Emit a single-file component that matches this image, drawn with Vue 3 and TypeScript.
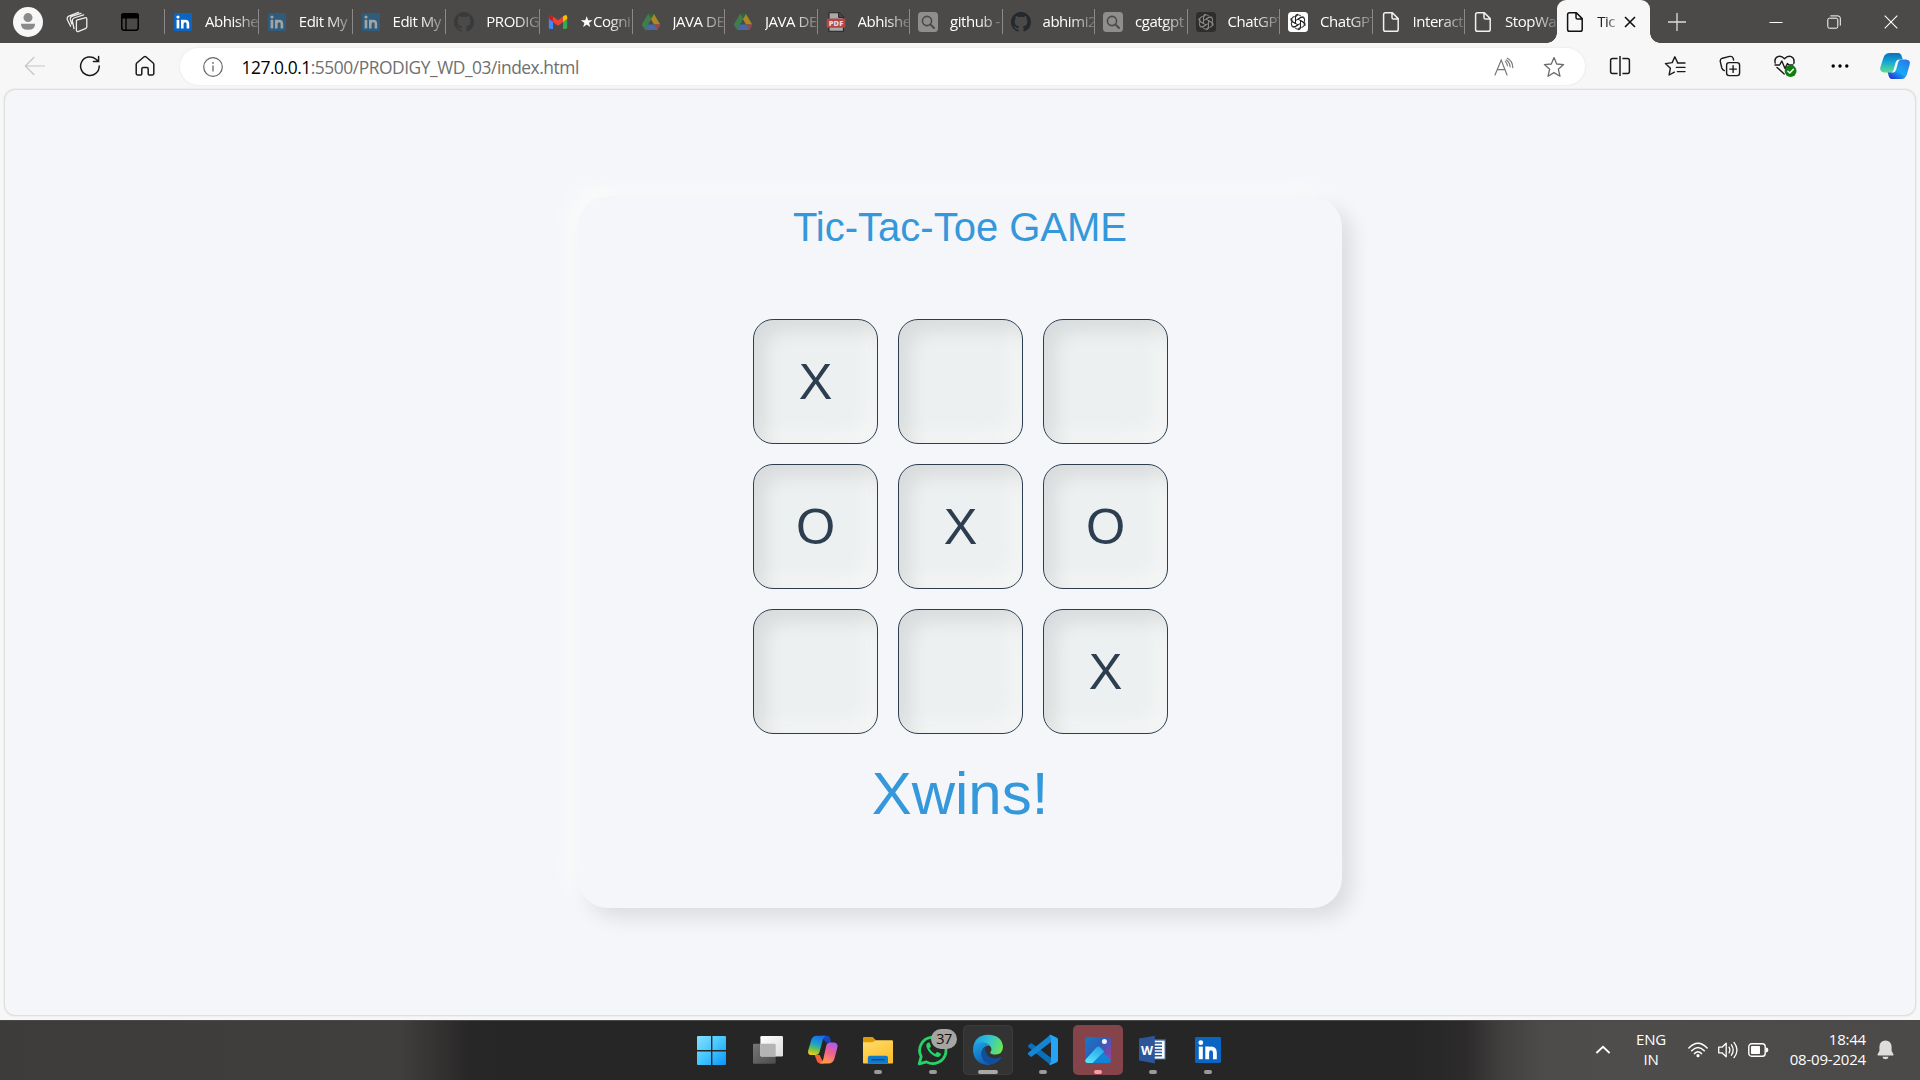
<script setup lang="ts">
interface Tab {
  icon: string
  title: string
  width: number
  dim?: boolean
}

const tabs: Tab[] = [
  { icon: 'linkedin', title: 'Abhishe', width: 93.75 },
  { icon: 'linkedin', title: 'Edit My', width: 93.75, dim: true },
  { icon: 'linkedin', title: 'Edit My', width: 93.75, dim: true },
  { icon: 'github', title: 'PRODIG', width: 93.75 },
  { icon: 'gmail', title: '★Cogni', width: 92.5 },
  { icon: 'drive', title: 'JAVA DE', width: 92.5, dim: true },
  { icon: 'drive', title: 'JAVA DE', width: 92.5, dim: true },
  { icon: 'pdf', title: 'Abhishe', width: 92.5 },
  { icon: 'search', title: 'github -', width: 92.5 },
  { icon: 'github', title: 'abhimi2', width: 92.5 },
  { icon: 'search', title: 'cgatgpt', width: 92.5 },
  { icon: 'gptdark', title: 'ChatGPT', width: 92.5 },
  { icon: 'gpt', title: 'ChatGPT', width: 92.5 },
  { icon: 'doc', title: 'Interact', width: 92.5 },
  { icon: 'doc', title: 'StopWa', width: 92.7 },
]

const board: string[] = ['X', '', '', 'O', 'X', 'O', '', '', 'X']

const apps: string[] = ['start', 'taskview', 'copilot', 'files', 'whatsapp', 'edge', 'vscode', 'photos', 'word', 'linkedin']
const running = (a: string): boolean => !['start', 'taskview', 'copilot'].includes(a)
const petals: number[] = [0, 60, 120, 180, 240, 300]
</script>

<template>
  <div class="screen">
    <header class="tabstrip">
      <div class="left-tools">
        <svg class="profile" width="30" height="30" viewBox="0 0 30 30">
          <circle cx="15" cy="15" r="15" fill="#f7f7f7" />
          <circle cx="15" cy="10.6" r="4.5" fill="#8a8a8a" />
          <path d="M8 16.8H22Q22.4 22.8 15 22.8T8 16.8Z" fill="#8a8a8a" />
        </svg>
        <svg class="workspaces" width="22" height="22" viewBox="0 0 22 22" fill="none" stroke="#eee" stroke-width="1.3" stroke-linejoin="round" stroke-linecap="round">
          <path d="M10.8 9.2 18.8 6.8Q20.8 6.3 20.8 8.2V15.8Q20.8 17.2 19.4 17.7L12.6 20.4Q10.6 21 10.4 19.2V9.8Z" />
          <path d="M8 17.6 6.4 10.2Q6 7.8 8 7L17.6 3.8M4.6 15.2 1.4 8.8Q.6 6.2 2.8 5.2L12.6 1.4M5.8 13 4.4 8.6Q3.8 6.2 5.8 5.4L15 2.4" />
        </svg>
        <svg class="panel" width="18" height="18" viewBox="0 0 18 18">
          <rect x=".8" y=".8" width="16.4" height="16.4" rx="2.4" fill="none" stroke="#000" stroke-width="1.5" />
          <path d="M0 5.5V3Q0 0 3 0H15Q18 0 18 3V5.5Z" />
          <path d="M5 5V17" stroke="#000" stroke-width="1.4" />
        </svg>
      </div>

      <div v-for="(t, i) in tabs" :key="i" class="tab" :style="{ width: t.width + 'px' }">
        <svg v-if="t.icon === 'linkedin'" class="fav" viewBox="0 0 20 20">
          <rect x="1" y="1" width="18" height="18" rx="1" :fill="t.dim ? '#2d5c7c' : '#0a66c2'" />
          <g :fill="t.dim ? '#a3a3a2' : '#fff'">
            <rect x="3.6" y="7.8" width="2.7" height="8.6" />
            <circle cx="5" cy="5" r="1.6" />
          </g>
          <path d="M9.3 16.4V7.8M9.3 16.4V12Q9.3 9 12.2 9 14.9 9 14.9 12V16.4" fill="none" :stroke="t.dim ? '#a3a3a2' : '#fff'" stroke-width="2.6" />
        </svg>
        <svg v-else-if="t.icon === 'github'" class="fav" viewBox="0 0 16 16">
          <path fill="#24292f" :opacity="i === 3 ? 0.45 : 1" d="M8 0C3.58 0 0 3.58 0 8c0 3.54 2.29 6.53 5.47 7.59.4.07.55-.17.55-.38v-1.49c-2.01.37-2.53-.49-2.69-.94-.09-.23-.48-.94-.82-1.13-.28-.15-.68-.52-.01-.53.63-.01 1.08.58 1.23.82.72 1.21 1.87.87 2.33.66.07-.52.28-.87.51-1.07-1.78-.2-3.64-.89-3.64-3.95 0-.87.31-1.59.82-2.15-.08-.2-.36-1.02.08-2.12 0 0 .67-.21 2.2.82a7.6 7.6 0 0 1 4 0c1.53-1.04 2.2-.82 2.2-.82.44 1.1.16 1.92.08 2.12.51.56.82 1.27.82 2.15 0 3.07-1.87 3.75-3.65 3.95.29.25.54.73.54 1.48v2.2c0 .21.15.46.55.38A8 8 0 0 0 16 8c0-4.42-3.58-8-8-8Z" />
        </svg>
        <svg v-else-if="t.icon === 'gmail'" class="fav" viewBox="0 0 20 20">
          <path d="M.8 5V15.6Q.8 17 2.2 17H5V8Z" fill="#4285f4" />
          <path d="M19.2 5V15.6Q19.2 17 17.8 17H15V8Z" fill="#34a853" />
          <path d="M15 4.5V10L19.2 6.8V5Q19 2 16.4 3.4Z" fill="#fbbc04" />
          <path d="M5 4.5V10L10 13.7 15 10V4.5L10 8.2Z" fill="#ea4335" />
          <path d="M.8 5V6.8L5 10V4.5L3.6 3.4Q1 2 .8 5Z" fill="#c5221f" />
        </svg>
        <svg v-else-if="t.icon === 'drive'" class="fav drive" viewBox="0 0 20 20">
          <path d="M7 2H13L4 18 .8 12.6Z" fill="#34a853" />
          <path d="M7 2H13L19.2 12.6H13Z" fill="#fbbc04" />
          <path d="M6.9 12.6H19.2L16.3 18H4Z" fill="#4285f4" />
          <path d="M7 2H13L10 7.3Z" fill="#188038" />
          <path d="M13 12.6H19.2L16.3 18Z" fill="#ea4335" />
        </svg>
        <svg v-else-if="t.icon === 'pdf'" class="fav" viewBox="0 0 20 20">
          <path d="M3 .7H13L17.4 5V19.3H3Z" fill="#a9a9a9" stroke="#252525" stroke-width="1.1" />
          <path d="M12.6.7V5.4H17.4" fill="#4b4a48" stroke="#252525" />
          <rect x=".7" y="6.4" width="18.6" height="9.4" rx="1" fill="#b34747" />
          <text x="10" y="13.9" text-anchor="middle" font-family="Open Sans, sans-serif" font-weight="800" font-size="7.6" fill="#ddd">PDF</text>
        </svg>
        <svg v-else-if="t.icon === 'search'" class="fav" viewBox="0 0 20 20">
          <rect width="20" height="20" rx="3.5" fill="#8f8e8c" />
          <circle cx="9" cy="9" r="4.6" fill="none" stroke="#4b4a48" stroke-width="1.6" />
          <path d="M12.4 12.4 16 16" stroke="#4b4a48" stroke-width="2" stroke-linecap="round" />
        </svg>
        <svg v-else-if="t.icon === 'gpt' || t.icon === 'gptdark'" class="fav" viewBox="0 0 20 20">
          <rect width="20" height="20" rx="3.5" :fill="t.icon === 'gpt' ? '#fff' : '#2e2d2c'" />
          <g fill="none" :stroke="t.icon === 'gpt' ? '#222' : '#8a8988'" stroke-width="1">
            <path v-for="a in petals" :key="a" :transform="`rotate(${a} 10 10)`" d="M7.5 11.5V5.9Q7.6 3.1 10.3 2.9 12.1 3 13.1 4.4M9.8 7.2 13.4 5.1Q15.5 4.2 16.7 6.2" />
          </g>
        </svg>
        <svg v-else class="fav" viewBox="0 0 20 20" fill="none" stroke="#f0f0f0" stroke-width="1.5" stroke-linejoin="round">
          <path d="M4.6.8H11.4L17.2 6.6V17.4Q17.2 19.2 15.4 19.2H4.4Q2.6 19.2 2.6 17.4V2.6Q2.6.8 4.6.8ZM11 .8V5.4Q11 7 12.6 7H17.2" />
        </svg>
        <span class="tab-title">{{ t.title }}</span>
      </div>

      <div class="tab active">
        <svg class="fav" viewBox="0 0 20 20" fill="none" stroke="#111" stroke-width="1.5" stroke-linejoin="round">
          <path d="M4.6.8H11.4L17.2 6.6V17.4Q17.2 19.2 15.4 19.2H4.4Q2.6 19.2 2.6 17.4V2.6Q2.6.8 4.6.8ZM11 .8V5.4Q11 7 12.6 7H17.2" />
        </svg>
        <span class="tab-title">Tic</span>
        <svg class="tab-close" width="12" height="12" viewBox="0 0 12 12"><path d="M1 1 11 11M11 1 1 11" stroke="#111" stroke-width="1.6" /></svg>
      </div>

      <svg class="new-tab" width="18" height="18" viewBox="0 0 18 18"><path d="M9 0V18M0 9H18" stroke="#ddd" stroke-width="1.3" /></svg>
      <div class="window-buttons">
        <svg width="14" height="14" viewBox="0 0 14 14"><path d="M.5 7.5H13.5" stroke="#fff" /></svg>
        <svg width="14" height="14" viewBox="0 0 14 14" fill="none" stroke="#fff"><rect x=".8" y="3.2" width="10" height="10" rx="1.6" /><path d="M3.4.9H11Q13.3.9 13.3 3.2V10.6" /></svg>
        <svg width="14" height="14" viewBox="0 0 14 14"><path d="M.7.7 13.3 13.3M13.3.7.7 13.3" stroke="#fff" stroke-width="1.1" /></svg>
      </div>
    </header>

    <nav class="toolbar">
      <div class="nav-buttons">
        <svg width="22" height="22" viewBox="0 0 22 22" fill="none" stroke="#c6c6c6" stroke-width="1.2"><path d="M21 11H1.5M10.3 2 1.3 11 10.3 20" /></svg>
        <svg width="22" height="22" viewBox="0 0 22 22" fill="none" stroke="#1a1a1a" stroke-width="1.5" stroke-linecap="round"><path d="M20.2 11A9.3 9.3 0 1 1 17 4.2L19.4 6.4M19.6 1.4V6.6H14.4" /></svg>
        <svg width="22" height="22" viewBox="0 0 22 22" fill="none" stroke="#1a1a1a" stroke-width="1.5" stroke-linejoin="round"><path d="M2.2 9.4Q2.2 8.6 2.8 8L10.1 1.8Q11 1.1 11.9 1.8L19.2 8Q19.8 8.6 19.8 9.4V18.6Q19.8 19.9 18.5 19.9H15.3Q14.2 19.9 14.2 18.8V14Q14.2 12.6 12.8 12.6H9.2Q7.8 12.6 7.8 14V18.8Q7.8 19.9 6.7 19.9H3.5Q2.2 19.9 2.2 18.6Z" /></svg>
      </div>
      <div class="address">
        <svg width="20" height="20" viewBox="0 0 20 20"><circle cx="10" cy="10" r="9.3" fill="none" stroke="#666" stroke-width="1.2" /><path d="M10 8.6V14.6" stroke="#666" stroke-width="1.3" /><circle cx="10" cy="5.9" r=".9" fill="#666" /></svg>
        <span class="url"><b>127.0.0.1</b>:5500/PRODIGY_WD_03/index.html</span>
        <svg class="read" width="20" height="20" viewBox="0 0 20 20" fill="none" stroke="#777" stroke-width="1.2" stroke-linecap="round"><path d="M1 18 7.2 3 13 18M3.4 12.6H10.9M11.4 4.6Q13.2 6 13.4 8.6M13.4 1.2Q18.6 4 18.8 10.6M12.2 3Q15.8 5.2 16.1 9.8" /></svg>
        <svg class="star" width="22" height="22" viewBox="0 0 22 22" fill="none" stroke="#6b6b6b" stroke-width="1.3" stroke-linejoin="round"><path d="M11 1.6 13.7 8 20.6 8.6 15.3 13.2 17 20.2 11 16.6 5 20.2 6.7 13.2 1.4 8.6 8.3 8Z" /></svg>
      </div>
      <div class="actions">
        <div><svg width="22" height="22" viewBox="0 0 22 22" fill="none" stroke="#1a1a1a" stroke-width="1.5"><path d="M8.6 3.6H3.6Q1.6 3.6 1.6 5.6V16.4Q1.6 18.4 3.6 18.4H8.6M13.4 3.6H18.4Q20.4 3.6 20.4 5.6V16.4Q20.4 18.4 18.4 18.4H13.4M11 1V21" /></svg></div>
        <div><svg width="22" height="22" viewBox="0 0 22 22" fill="none" stroke="#1a1a1a" stroke-width="1.4" stroke-linejoin="round" stroke-linecap="round"><path d="M13.6 7.6 10.8 1.8 8.2 7.6 1.4 8.6 6.4 13.2 5.1 20 10.4 17.2M13.4 8H21M12.4 12.4H21M13.4 16.6H21" /></svg></div>
        <div><svg width="22" height="22" viewBox="0 0 22 22" fill="none" stroke="#1a1a1a" stroke-width="1.4" stroke-linecap="round"><rect x="7.6" y="7.6" width="13" height="13" rx="2.6" /><path d="M14.1 10.8V17.4M10.8 14.1H17.4M5.4 15.6Q3.4 15 2.8 13L1.3 6.6Q.8 4 3.4 3.2L10.8 1.4Q13.2 1 14.2 3.2L14.6 5" /></svg></div>
        <div><svg width="26" height="24" viewBox="0 0 26 24" fill="none" stroke="#1a1a1a" stroke-width="1.4" stroke-linejoin="round" stroke-linecap="round"><path d="M3.2 9Q2 4.2 5.8 2.6 9.4 1.4 12.5 4.8 15.6 1.4 19.2 2.6 23 4.4 21.8 9.4M5 13.4 12.2 20M3 11H7.6L9.8 7 13 14.6 15.4 9.6 17 11H21" /><circle cx="18.6" cy="17" r="5.9" fill="#107c10" stroke="none" /><path d="M15.9 17.2 17.8 19 21.4 15.3" stroke="#fff" stroke-width="1.5" /></svg></div>
        <div><svg width="18" height="6" viewBox="0 0 18 6"><circle cx="2.2" cy="3" r="1.7" /><circle cx="9" cy="3" r="1.7" /><circle cx="15.8" cy="3" r="1.7" /></svg></div>
        <div>
          <svg width="30" height="28" viewBox="0 0 30 28">
            <defs>
              <linearGradient id="ca" x1="0" y1="0" x2="0" y2="1"><stop offset="0" stop-color="#0a6fb5" /><stop offset=".45" stop-color="#14a5d8" /><stop offset="1" stop-color="#5ee08a" /></linearGradient>
              <linearGradient id="cb" x1="1" y1="0" x2=".2" y2="1"><stop offset="0" stop-color="#2f6fe4" /><stop offset=".6" stop-color="#18aaf5" /><stop offset="1" stop-color="#2036d8" /></linearGradient>
            </defs>
            <path d="M18.6 7.5H26Q30.5 8 29.8 12L27 22Q25.5 27 21.5 27H12Q9 27 8.2 22L7.5 20H11.2Q14 20 15 16.6L16.8 10Z" fill="url(#cb)" />
            <path d="M19.4 7.6Q16.6 7.6 15.6 10.6L13.8 17Q13 20.4 10 20.4H13.6Q15.4 20.2 16.2 17.6L18.2 10.2Q19 7.8 21 7.6Z" fill="#f7f7f7" />
            <path d="M9.8 1H18.2Q21 1 21.8 4.6L22.8 7.6H19.4Q16.6 7.6 15.6 10.6L13.8 17Q13 20.4 10 20.4H4Q-.5 20 .3 15.6L3.5 5.6Q5 1 9.8 1Z" fill="url(#ca)" />
          </svg>
        </div>
      </div>
    </nav>

    <main class="viewport">
      <section class="card">
        <h1>Tic-Tac-Toe GAME</h1>
        <div class="grid">
          <button v-for="(c, i) in board" :key="i" class="cell">{{ c }}</button>
        </div>
        <p class="result">Xwins!</p>
      </section>
    </main>

    <footer class="taskbar">
      <div class="apps">
        <div v-for="a in apps" :key="a" class="app" :class="a">
          <svg width="50" height="50" viewBox="0 0 50 50">
            <template v-if="a === 'start'">
              <defs><linearGradient id="w" gradientUnits="userSpaceOnUse" x1="9" y1="11" x2="38" y2="40"><stop offset="0" stop-color="#86e0ff" /><stop offset=".5" stop-color="#43c6ff" /><stop offset="1" stop-color="#0a93fb" /></linearGradient></defs>
              <path d="M10 11H23V25H9V12Q9 11 10 11ZM24.4 11H37Q38 11 38 12V25H24.4ZM9 26.4H23V40H10Q9 40 9 39ZM24.4 26.4H38V39Q38 40 37 40H24.4Z" fill="url(#w)" />
            </template>
            <template v-else-if="a === 'taskview'">
              <defs>
                <linearGradient id="t1" x1="0" y1="0" x2="1" y2="1"><stop offset="0" stop-color="#fff" /><stop offset="1" stop-color="#dcdcdc" /></linearGradient>
                <linearGradient id="t2" x1="0" y1="0" x2="1" y2="1"><stop offset="0" stop-color="#777" /><stop offset="1" stop-color="#4c4c4c" /></linearGradient>
              </defs>
              <rect x="10" y="18.7" width="22.7" height="20" rx="1.2" fill="url(#t2)" />
              <rect x="17.4" y="11" width="22.6" height="20.4" rx="1.2" fill="url(#t1)" />
              <path d="M17.4 18.7H31.5Q32.7 18.7 32.7 20V31.4H18.5Q17.4 31.4 17.4 30Z" fill="#b4b4b4" />
            </template>
            <template v-else-if="a === 'copilot'">
              <defs>
                <linearGradient id="c1" x1=".5" y1="0" x2=".25" y2="1"><stop offset="0" stop-color="#1c6fe8" /><stop offset=".4" stop-color="#1b9fd0" /><stop offset=".7" stop-color="#6cc04a" /><stop offset="1" stop-color="#f6cf1c" /></linearGradient>
                <linearGradient id="c2" x1=".8" y1="0" x2=".4" y2="1"><stop offset="0" stop-color="#a65cf0" /><stop offset=".5" stop-color="#f0628c" /><stop offset="1" stop-color="#ff9a4a" /></linearGradient>
              </defs>
              <path d="M23 10.8H29Q31.6 11 32.4 14.4L33.2 17.6H28Z" fill="#1646c8" />
              <path d="M16.6 30H21.6L25.8 38.4H22Q19.4 38.2 18.6 35Z" fill="#f4603a" />
              <path d="M18.6 10.8H28Q25.6 11.6 24.8 14.8L21.6 26.8Q20.6 30 17.6 30H13.2Q9.2 29.6 10.2 25.4L13.4 14.6Q14.8 10.8 18.6 10.8Z" fill="url(#c1)" />
              <path d="M31.6 17.4H36Q40.4 18 39.4 22.4L36.4 33.8Q34.8 38.6 30.6 38.6H21.6Q24.2 38 25.2 34.6L28.2 21Q29 17.6 31.6 17.4Z" fill="url(#c2)" />
            </template>
            <template v-else-if="a === 'files'">
              <defs><linearGradient id="f" x1="0" y1="0" x2=".6" y2="1"><stop offset="0" stop-color="#ffdd6b" /><stop offset="1" stop-color="#fdbf2d" /></linearGradient></defs>
              <path d="M10 13.2Q10 12 11.2 12H19.6L23 15.2V18H10Z" fill="#dc9a06" />
              <path d="M10 17.2H19.6L23 15.2H38.8Q40 15.2 40 16.4V37.4Q40 38.6 38.8 38.6H11.2Q10 38.6 10 37.4Z" fill="url(#f)" />
              <path d="M14.8 38.6V33Q14.8 30.8 17 30.8H33Q35 30.8 35 33V38.6Z" fill="#0f79cc" />
              <path d="M18.5 34.7H31.5" stroke="#0a4c86" stroke-width="1.4" />
            </template>
            <template v-else-if="a === 'whatsapp'">
              <path d="M11.2 38.8 13.2 31.6A13.2 13.2 0 1 1 18.4 36.9Z" fill="none" stroke="#25d366" stroke-width="2.8" stroke-linejoin="round" />
              <path d="M20.6 17.4Q19 17.6 18.3 19.8 18 23.4 22.2 28 26.8 32.4 30.4 32Q33 31.2 33 28.8L29.2 26.8 27.2 29Q23.4 27.2 21.4 23.6L23 21.6 21.6 17.8Z" fill="#25d366" />
            </template>
            <template v-else-if="a === 'edge'">
              <defs>
                <linearGradient id="e1" x1="0" y1=".3" x2="1" y2=".6"><stop offset="0" stop-color="#1b9de2" /><stop offset=".5" stop-color="#34c6cf" /><stop offset="1" stop-color="#6be84f" /></linearGradient>
                <linearGradient id="e2" x1="0" y1="0" x2=".4" y2="1"><stop offset="0" stop-color="#1fa5ea" /><stop offset="1" stop-color="#0e63b6" /></linearGradient>
              </defs>
              <path d="M10.2 23Q11.6 10 25 9.8 39.6 10.4 40 22.6 39.4 29.4 32.8 29.6 27.4 29.6 27.2 27.6 30 24 26.6 20.6 20.4 15.6 10.2 23Z" fill="url(#e1)" />
              <path d="M10 25Q10.4 17.4 18.6 17.2 24 17.2 26.8 20.6 20 20.6 18.6 27.2 18.4 34.6 27 39.8 20 40.6 15 36.6 10 32 10 25Z" fill="url(#e2)" />
              <path d="M22.4 22.6Q16.6 26.4 19 32.6 21.8 38.4 27 39.8 34.8 38.6 38.6 32.4 38.6 31.6 37.4 32 31 35 25.8 31.6 21.4 28 22.4 22.6Z" fill="#124f9b" />
            </template>
            <template v-else-if="a === 'vscode'">
              <path d="M10.2 20.4 12.4 18.4Q13.2 17.9 14 18.4L33 32.8V38.8Q32 39.6 31 38.8L10.2 22Q9.6 21.2 10.2 20.4Z" fill="#0c6fba" />
              <path d="M10.2 29.4 12.4 31.4Q13.2 31.9 14 31.4L33 17V11Q32 10.2 31 11L10.2 27.8Q9.6 28.6 10.2 29.4Z" fill="#1487d4" />
              <path d="M31.2 10.2Q32 9.4 33.2 10L39 12.8Q40 13.4 40 14.4V35.4Q40 36.6 39 37.2L33.2 39.8Q32 40.4 31.2 39.6L33 37V13Z" fill="#26a3f2" />
            </template>
            <template v-else-if="a === 'photos'">
              <defs>
                <linearGradient id="p1" x1="0" y1="0" x2="1" y2=".8"><stop offset="0" stop-color="#1379cf" /><stop offset=".5" stop-color="#2c5fb8" /><stop offset="1" stop-color="#9a3fa4" /></linearGradient>
                <linearGradient id="p2" x1=".2" y1="1" x2=".8" y2="0"><stop offset="0" stop-color="#58e3fb" /><stop offset="1" stop-color="#23a4ea" /></linearGradient>
              </defs>
              <rect x="12" y="12" width="26" height="26" rx="2.4" fill="url(#p1)" />
              <path d="M20 38 30.4 27.2 38 34.8Q38 38 35.6 38Z" fill="#1283d6" />
              <path d="M12.2 35 23.4 22.6Q25.4 20.6 27.4 22.6L31.2 26.4 19.6 38H14.4Q12.2 38 12.2 35Z" fill="url(#p2)" />
              <circle cx="31.4" cy="16.6" r="2.5" fill="#f1f5fb" />
            </template>
            <template v-else-if="a === 'word'">
              <rect x="24" y="14" width="14" height="20.8" rx="1" fill="#2b579a" />
              <rect x="25" y="15.6" width="11.6" height="18" fill="#fff" />
              <path d="M25 18H34M25 21.2H34M25 24.4H34M25 27.6H34M25 30.8H34" stroke="#2b579a" stroke-width="1.5" />
              <path d="M11 13.4 26.8 10.8V38.4L11 35.6Z" fill="#2b579a" />
              <text x="19" y="29.8" text-anchor="middle" font-family="Open Sans, sans-serif" font-weight="700" font-size="13" textLength="12" lengthAdjust="spacingAndGlyphs" fill="#fff">W</text>
            </template>
            <template v-else>
              <rect x="12" y="12" width="26" height="26" rx="1.4" fill="#0a66c2" />
              <rect x="15.8" y="21.6" width="4" height="12.6" fill="#fff" />
              <circle cx="17.8" cy="17.7" r="2.4" fill="#fff" />
              <path d="M24.2 34.2V21.6M24.2 34.2V27.6Q24.3 23.4 28 23.4 31.8 23.4 31.9 27.6V34.2" fill="none" stroke="#fff" stroke-width="3.8" />
            </template>
          </svg>
          <span v-if="a === 'whatsapp'" class="badge">37</span>
          <i v-if="running(a)" class="mark"></i>
        </div>
      </div>

      <div class="tray">
        <svg width="16" height="10" viewBox="0 0 16 10"><path d="M1.4 8 8 1.8 14.6 8" fill="none" stroke="#fff" stroke-width="1.8" /></svg>
        <div class="lang">ENG<br />IN</div>
        <svg class="wifi" width="20" height="16" viewBox="0 0 20 16" fill="none" stroke="#fff" stroke-width="1.5" stroke-linecap="round"><path d="M.9 6Q10-3.6 19.1 6M3.7 8.8Q10 2.2 16.3 8.8M6.5 11.6Q10 7.8 13.5 11.6" /><circle cx="10" cy="13.7" r="1.6" fill="#fff" stroke="none" /></svg>
        <svg class="sound" width="20" height="18" viewBox="0 0 20 18" fill="none" stroke="#fff" stroke-width="1.3" stroke-linejoin="round" stroke-linecap="round"><path d="M.7 6.2H4L8.2 2.2V15.8L4 11.8H.7ZM11 6.2Q12.8 9 11 11.8M13.4 3.8Q17 9 13.4 14.2M16 1.4Q22 9 16 16.6" /></svg>
        <svg class="battery" width="21" height="14" viewBox="0 0 21 14"><rect x=".8" y=".8" width="16.4" height="12.4" rx="2.8" fill="none" stroke="#fff" stroke-width="1.4" /><rect x="3" y="3" width="9" height="8" rx=".8" fill="#fff" /><path d="M18 4.6Q20.4 4.6 20.4 7T18 9.4Z" fill="#fff" /></svg>
        <div class="clock">18:44<br />08-09-2024</div>
        <svg class="bell" width="17" height="20" viewBox="0 0 17 20"><path d="M8.5.4Q14.4.8 14.6 6.8V11L16.6 14.6Q16.6 15.6 15.8 15.6H1.2Q.4 15.6.4 14.6L2.4 11V6.8Q2.6.8 8.5.4ZM5.4 16.8H11.6Q11 19.3 8.5 19.3T5.4 16.8Z" fill="#dedddb" /></svg>
      </div>
    </footer>
  </div>
</template>

<style>
body {
  margin: 0;
  overflow: hidden;
}
</style>

<style scoped>
.screen {
  width: 1920px;
  height: 1080px;
  display: flex;
  flex-direction: column;
  background: #f7f7f7;
  font-family: "Open Sans", "Noto Sans", "DejaVu Sans", sans-serif;
  overflow: hidden;
}
.screen svg {
  display: block;
  flex: none;
}

/* Tab strip */
.tabstrip {
  height: 43px;
  flex: none;
  display: flex;
  align-items: center;
  background: #4b4a48;
}
.left-tools {
  width: 164px;
  flex: none;
  display: flex;
  align-items: center;
}
.profile {
  margin-left: 13px;
}
.workspaces {
  margin-left: 23px;
}
.panel {
  margin-left: 33px;
}
.tab {
  box-sizing: border-box;
  height: 43px;
  flex: none;
  display: flex;
  align-items: center;
  padding-left: 9px;
  color: #fff;
  font-size: 15px;
  background: linear-gradient(#8b8a89, #8b8a89) 0 9px / 1px 25px no-repeat;
}
.fav {
  width: 20px;
  height: 20px;
  margin-top: 1px;
}
.fav.drive {
  opacity: 0.55;
}
.tab-title {
  flex: 1;
  min-width: 0;
  margin-left: 12px;
  overflow: hidden;
  white-space: nowrap;
  letter-spacing: -0.45px;
  line-height: 22px;
  margin-top: -2px;
  -webkit-mask-image: linear-gradient(to right, #000 calc(100% - 24px), rgba(0, 0, 0, 0.2));
  mask-image: linear-gradient(to right, #000 calc(100% - 24px), rgba(0, 0, 0, 0.2));
}
.tab.active {
  position: relative;
  width: 93px;
  padding-left: 8px;
  border-radius: 9px 9px 0 0;
  background: #f7f7f7;
  color: #222;
}
.tab.active::before,
.tab.active::after {
  content: "";
  position: absolute;
  bottom: 0;
  width: 10px;
  height: 10px;
}
.tab.active::before {
  left: -10px;
  background: radial-gradient(circle at 0 0, #4b4a48 9.5px, #f7f7f7 10px);
}
.tab.active::after {
  right: -10px;
  background: radial-gradient(circle at 100% 0, #4b4a48 9.5px, #f7f7f7 10px);
}
.active .tab-title {
  flex: none;
  width: 19px;
  margin-left: 12.5px;
  -webkit-mask-image: linear-gradient(to right, #000 9px, rgba(0, 0, 0, 0.35));
  mask-image: linear-gradient(to right, #000 9px, rgba(0, 0, 0, 0.35));
}
.tab-close {
  margin-left: 8px;
  margin-top: 1px;
}
.new-tab {
  margin-left: 18px;
}
.window-buttons {
  margin-left: auto;
  margin-right: 22px;
  display: flex;
  gap: 43.5px;
}

/* Toolbar */
.toolbar {
  height: 47px;
  flex: none;
  display: flex;
  align-items: flex-start;
}
.nav-buttons {
  width: 180px;
  height: 46px;
  box-sizing: border-box;
  flex: none;
  padding-left: 24px;
  display: flex;
  align-items: center;
  gap: 33px;
}
.address {
  box-sizing: border-box;
  width: 1405px;
  flex: none;
  height: 37px;
  margin-top: 5px;
  padding: 0 20px 0 22.5px;
  border-radius: 19px;
  background: #fff;
  box-shadow: 0 0 3px rgba(0, 0, 0, 0.08);
  display: flex;
  align-items: center;
}
.url {
  margin-left: 19px;
  font-size: 17.4px;
  line-height: 24px;
  letter-spacing: -0.46px;
  color: #6f6f6f;
  white-space: nowrap;
}
.url b {
  font-weight: 400;
  color: #000;
}
.read {
  margin-left: auto;
}
.star {
  margin-left: 29px;
}
.actions {
  display: flex;
  height: 46px;
  margin-left: 7px;
}
.actions div {
  width: 55px;
  flex: none;
  display: flex;
  align-items: center;
  justify-content: center;
}

/* Page */
.viewport {
  height: 925px;
  flex: none;
  margin: 0 5px 5px;
  border-radius: 10px;
  background: #f5f6fa;
  box-shadow: 0 0 2px 1px rgba(0, 0, 0, 0.13);
  display: flex;
  align-items: center;
  justify-content: center;
  font-family: "Liberation Sans", Arial, sans-serif;
}
.card {
  box-sizing: border-box;
  width: 764.4px;
  height: 711px;
  padding-top: 7px;
  border-radius: 30px;
  background: #f5f6fa;
  box-shadow: 10px 10px 20px rgba(0, 0, 0, 0.1), -10px -10px 22px rgba(252, 252, 250, 0.85);
  display: flex;
  flex-direction: column;
  align-items: center;
}
h1 {
  margin: 0;
  font-size: 40px;
  line-height: 46px;
  font-weight: 400;
  color: #3498db;
}
.grid {
  margin-top: 69px;
  margin-left: 1px;
  display: grid;
  grid-template-columns: repeat(3, 125px);
  grid-auto-rows: 125px;
  gap: 20px;
}
.cell {
  padding: 0;
  border: 1px solid #2c3e50;
  border-radius: 20px;
  background: #ecf0f1;
  box-shadow: inset 10px 10px 20px rgba(0, 0, 0, 0.09), inset -10px -10px 20px rgba(252, 250, 248, 0.6);
  color: #2c3e50;
  font: 50.4px "Liberation Sans", Arial, sans-serif;
}
.result {
  margin: 25px 0 0;
  font-size: 60px;
  line-height: 69px;
  color: #3498db;
}

/* Taskbar */
.taskbar {
  position: relative;
  height: 60px;
  box-sizing: border-box;
  flex: none;
  padding: 4px 26px 0 688px;
  border-top: 1px solid #4a4a49;
  background: linear-gradient(to right, #3d3c3a 0, #403f3d 400px, #373534 430px, #282727 470px, #262626 520px, #262626 1410px, #2c2a2a 1465px, #403f3e 1500px, #4c4b49 1540px, #4e4d4b 1600px, #4b4a48 1920px);
  display: flex;
}
.apps {
  display: flex;
  gap: 5px;
}
.app {
  position: relative;
  width: 50px;
  height: 50px;
  border-radius: 5px;
}
.app.edge {
  background: #333;
  box-shadow: inset 0 0 0 1px #3b3b3b;
}
.app.photos {
  background: #844449;
}
.mark {
  position: absolute;
  left: 21px;
  bottom: 1px;
  width: 8px;
  height: 4px;
  border-radius: 2px;
  background: #9b9b9b;
}
.edge .mark {
  left: 15px;
  width: 20px;
  background: #aaa9a5;
}
.photos .mark {
  background: #ff99a4;
}
.badge {
  position: absolute;
  left: 23px;
  top: 4px;
  width: 26px;
  height: 20px;
  border-radius: 10px;
  background: #a6a5a2;
  color: #111;
  font-size: 14.5px;
  line-height: 20px;
  text-align: center;
  letter-spacing: -0.5px;
}
.tray {
  flex: 1;
  display: flex;
  align-items: center;
  justify-content: flex-end;
  height: 50px;
  color: #fff;
  font-size: 15px;
  line-height: 20px;
  letter-spacing: -0.2px;
}
.lang {
  width: 40px;
  margin: 0 0 2px 20px;
  text-align: center;
}
.wifi {
  margin-left: 17px;
}
.sound {
  margin-left: 10px;
}
.battery {
  margin-left: 10px;
}
.clock {
  width: 97px;
  margin-bottom: 3px;
  text-align: right;
}
.bell {
  margin-left: 11px;
}
</style>
